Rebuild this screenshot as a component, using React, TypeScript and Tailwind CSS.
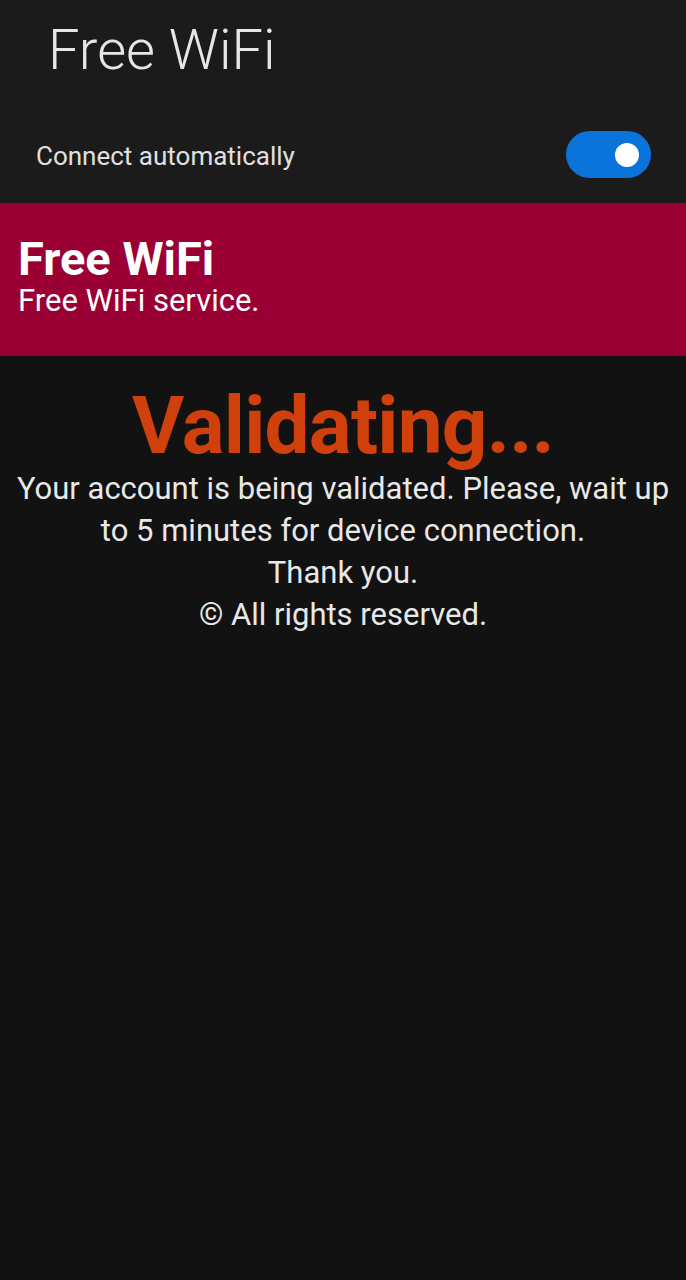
import React, { useState } from 'react';

const App: React.FC = () => {
  const [auto, setAuto] = useState(true);

  return (
    <div className="min-h-screen bg-[#121212] text-white" style={{ fontFamily: 'Roboto, "Noto Sans", sans-serif' }}>
      {/* top bar */}
      <div className="bg-[#1b1b1b] h-[203px] flex flex-col">
        <h1 className="pl-[48px] pt-[18px] text-[56px] leading-[64px] font-light text-[#e6e6e6]">Free WiFi</h1>
        <div className="flex items-center justify-between pl-[36px] pr-[35px] mt-[49px]">
          <span className="text-[26px] text-[#e0e0e0] mt-[4px]">Connect automatically</span>
          <button
            onClick={() => setAuto(!auto)}
            className={`w-[85px] h-[47px] rounded-full flex items-center px-[12px] ${auto ? 'bg-[#0a74da] justify-end' : 'bg-[#555] justify-start'}`}
          >
            <span className="block w-[24px] h-[24px] rounded-full bg-white" />
          </button>
        </div>
      </div>

      {/* banner */}
      <div className="bg-[#9b0034] h-[153px] px-[18px] pt-[30px]">
        <div className="text-[47px] leading-[52px] font-bold">Free WiFi</div>
        <div className="text-[31px] leading-[32px]">Free WiFi service.</div>
      </div>

      {/* status */}
      <div className="text-center pt-[28px]">
        <div className="text-[80px] leading-[84px] font-bold text-[#d0400c] tracking-[-0.75px]">Validating...</div>
        <div className="text-[31px] leading-[42px] text-[#e8e8e8] px-[4px]">
          <p>Your account is being validated. Please, wait up to 5 minutes for device connection.</p>
          <p>Thank you.</p>
          <p>© All rights reserved.</p>
        </div>
      </div>
    </div>
  );
};

export default App;
